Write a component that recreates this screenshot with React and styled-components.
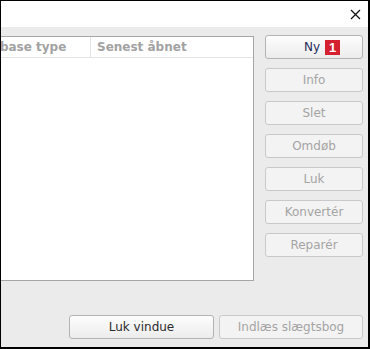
import React from 'react'
import styled, { createGlobalStyle } from 'styled-components'

const Global = createGlobalStyle`
  html, body { margin: 0; padding: 0; background: #fff; }
  body { font-family: "DejaVu Sans", Verdana, sans-serif; font-size: 12px; }
`

const Window = styled.div`
  width: 370px;
  height: 349px;
  box-sizing: border-box;
  border: 1px solid #000;
  border-right-width: 2px;
  border-bottom-width: 2px;
  display: flex;
  flex-direction: column;
  overflow: hidden;
`

const TitleBar = styled.div`
  height: 26px;
  flex: none;
  background: #fff;
  display: flex;
  justify-content: flex-end;
  align-items: center;
  padding-right: 7px;
`

const Body = styled.div`
  flex: 1;
  background: #ebebeb;
  display: grid;
  grid-template-columns: 1fr 98px;
  grid-template-rows: 1fr auto;
  column-gap: 11px;
  padding: 8px 5px 8px 0;
`

const List = styled.div`
  margin-left: -40px;
  margin-top: 1px;
  height: 245px;
  background: #fff;
  border: 1px solid #a6a6a6;
  box-sizing: border-box;
`

const Header = styled.div`
  display: flex;
  height: 20px;
  border-bottom: 1px solid #e4e4e4;
`

const HeadCell = styled.div`
  width: ${p => p.$w}px;
  padding-left: 6px;
  box-sizing: border-box;
  border-right: ${p => (p.$sep ? '1px solid #e4e4e4' : 'none')};
  color: #a2a2a2;
  font-weight: bold;
  line-height: 20px;
  white-space: nowrap;
`

const Side = styled.div`
  display: flex;
  flex-direction: column;
  gap: 9px;
`

const Button = styled.button`
  height: 24px;
  width: ${p => (p.$w ? `${p.$w}px` : '100%')};
  box-sizing: border-box;
  font-family: "DejaVu Sans", Verdana, sans-serif;
  font-size: 12px;
  border-radius: 3px;
  border: 1px solid ${p => (p.$off ? '#c9c9c9' : '#b3b3b3')};
  background: ${p => (p.$off ? '#f3f3f3' : 'linear-gradient(#fdfdfd, #ececec)')};
  color: ${p => (p.$off ? '#a4a4a4' : '#2b2b2b')};
  display: flex;
  align-items: center;
  justify-content: center;
  gap: 5px;
  padding: 0;
`

const NewLabel = styled.span`
  color: #1f2d5c;
  margin-left: 16px;
`

const Badge = styled.span`
  background: #d4202f;
  color: #fff;
  font-weight: bold;
  font-family: "Liberation Sans", Arial, sans-serif;
  font-size: 13px;
  width: 15px;
  height: 15px;
  line-height: 15px;
  text-align: center;
`

const Footer = styled.div`
  grid-column: 1 / span 2;
  display: flex;
  justify-content: flex-end;
  gap: 5px;
  align-self: end;
`

export default function App() {
  return (
    <>
      <Global />
      <Window>
        <TitleBar>
          <svg width="11" height="11" viewBox="0 0 11 11">
            <path d="M1 1L10 10M10 1L1 10" stroke="#111" strokeWidth="1.2" />
          </svg>
        </TitleBar>
        <Body>
          <List>
            <Header>
              <HeadCell $w={129} $sep>Database type</HeadCell>
              <HeadCell $w={120}>Senest åbnet</HeadCell>
            </Header>
          </List>
          <Side>
            <Button>
              <NewLabel>Ny</NewLabel>
              <Badge>1</Badge>
            </Button>
            <Button $off>Info</Button>
            <Button $off>Slet</Button>
            <Button $off>Omdøb</Button>
            <Button $off>Luk</Button>
            <Button $off>Konvertér</Button>
            <Button $off>Reparér</Button>
          </Side>
          <Footer>
            <Button $w={145}>Luk vindue</Button>
            <Button $w={144} $off>Indlæs slægtsbog</Button>
          </Footer>
        </Body>
      </Window>
    </>
  )
}
